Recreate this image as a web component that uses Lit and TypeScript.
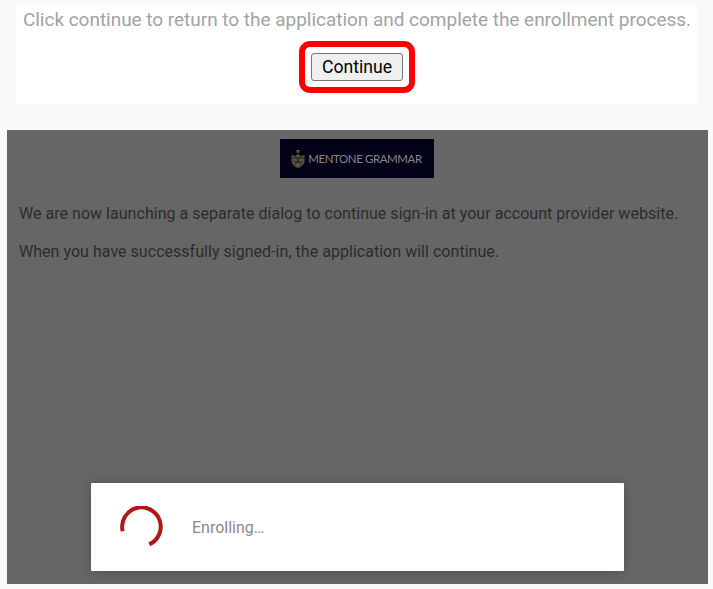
import { LitElement, html, css } from "lit";
import { customElement } from "lit/decorators.js";

@customElement("app-root")
export class AppRoot extends LitElement {
  static styles = css`
    :host {
      display: block;
      width: 713px;
      height: 589px;
      background: #f8f9fb;
      font-family: Roboto, "Liberation Sans", sans-serif;
      overflow: hidden;
      padding: 5px 5px 5px 7px;
      box-sizing: border-box;
    }
    .card {
      margin: 0 10px 26px 9px;
      height: 99px;
      background: #fff;
      display: flex;
      flex-direction: column;
      align-items: center;
      box-sizing: border-box;
      padding-top: 4px;
    }
    .msg {
      font-size: 19px;
      line-height: 22px;
      letter-spacing: -0.025px;
      color: #a3a3a3;
      white-space: nowrap;
    }
    .ring {
      margin-top: 10px;
      border: 6px solid #ff0000;
      border-radius: 11px;
      padding: 6px;
      display: flex;
    }
    button {
      width: 92px;
      height: 28px;
      padding: 0;
      font-family: inherit;
      font-size: 17.6px;
      color: #000;
      background: #efefef;
      border: 1px solid #767676;
      border-radius: 3px;
    }
    .panel {
      width: 701px;
      height: 454px;
      background: #666;
      box-sizing: border-box;
      padding: 9px 12px 0;
      display: flex;
      flex-direction: column;
      color: #2c2c2c;
      font-size: 16px;
      line-height: 19px;
    }
    .logo {
      align-self: center;
      margin-left: -1px;
      width: 154px;
      height: 39px;
      background: #020118;
      display: flex;
      align-items: center;
      justify-content: center;
      gap: 3px;
      box-sizing: border-box;
      padding-right: 1px;
    }
    .logo svg { display: block; }
    .brand {
      color: #87878b;
      font-family: Lato, sans-serif;
      font-size: 11.5px;
      white-space: nowrap;
      letter-spacing: -0.42px;
    }
    p { margin: 0; white-space: nowrap; }
    .p1 { margin-top: 26px; letter-spacing: 0.03px; }
    .p2 { margin-top: 19px; letter-spacing: 0.03px; }
    .toast {
      margin: 222px 0 0 72px;
      width: 533px;
      height: 88px;
      background: #fff;
      border-radius: 1px;
      box-shadow: 0 1px 12px rgba(0, 0, 0, 0.22);
      display: flex;
      align-items: center;
      box-sizing: border-box;
      padding-left: 29px;
      gap: 29px;
    }
    .toast svg { display: block; }
    .toast span { color: #8a8a8a; font-size: 16px; }
  `;

  render() {
    return html`
      <div class="card">
        <div class="msg">Click continue to return to the application and complete the enrollment process.</div>
        <div class="ring"><button>Continue</button></div>
      </div>
      <div class="panel">
        <div class="logo">
          <svg width="14" height="20" viewBox="0 0 14 20">
            <path d="M0.5 6 L4 7 L7 5 L10 7 L13.5 6 L13.5 13 Q12 17 7 19 Q2 17 0.5 13 Z" fill="#5a5340" />
            <path d="M5 1 H9 L8 4 H6 Z" fill="#5a5340" />
            <path d="M1 9 H13 M2 13 H12 M4 7 L10 16 M10 7 L4 16" stroke="#25241f" stroke-width="1" fill="none" />
          </svg>
          <span class="brand">MENTONE GRAMMAR</span>
        </div>
        <p class="p1">We are now launching a separate dialog to continue sign-in at your account provider website.</p>
        <p class="p2">When you have successfully signed-in, the application will continue.</p>
        <div class="toast">
          <svg width="43" height="42" viewBox="0 0 43 42">
            <path d="M2.7 25.3 A 19.3 19.3 0 1 1 29.3 38.3" fill="none" stroke="#b01818" stroke-width="4" />
          </svg>
          <span>Enrolling…</span>
        </div>
      </div>
    `;
  }
}
